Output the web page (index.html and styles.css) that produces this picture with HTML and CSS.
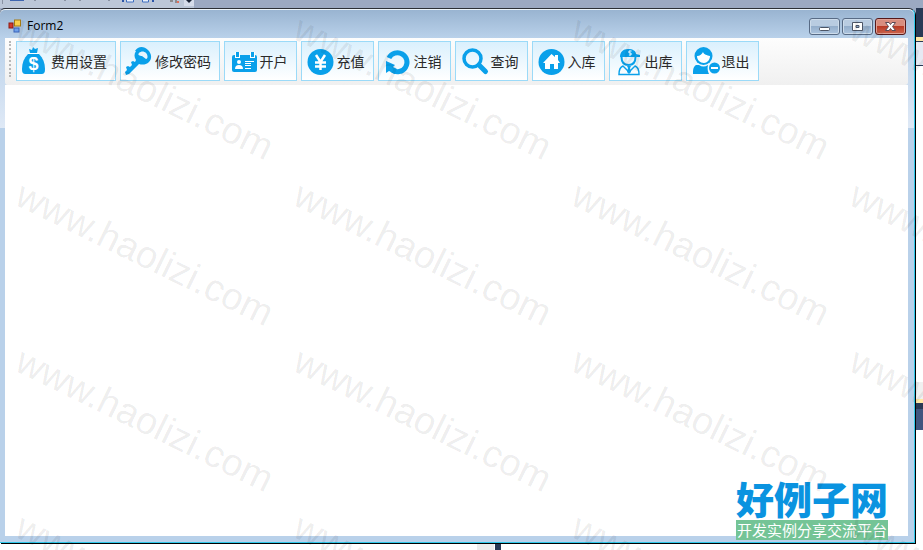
FILE: index.html
```
<!DOCTYPE html>
<html lang="zh-CN">
<head>
  <meta charset="UTF-8" />
  <meta name="viewport" content="width=device-width, initial-scale=1.0"/>
  <title>Form2</title>
  <link rel="stylesheet" href="styles.css">
</head>
<body>
  <div class="ide-top">
    <svg class="ide-tools" width="194" height="8" viewBox="0 0 194 8">
      <path d="M10 0h14v1H10z" fill="#3f66b0"/>
      <path d="M2 0h1v4H2zM34 0h2v1h-2zM64 0h2v1h-2zM79 0h2v1h-2zM108 0h2v1h-2z" fill="#8a93a3"/>
      <path d="M126.500 0v2h7V0M142.500 0v2h6V0" fill="#e8f0fc" stroke="#3f6fc0"/>
      <path d="M122 0h2v2h-2zM152 0h2v2h-2z" fill="#2b55a8"/>
      <path d="M170 0h3v2h-3zM175 0h2v3h-2z" fill="#8a8a8e"/>
      <path d="M177 1h2v2h-2z" fill="#e0705c"/>
      <path d="M184 0h10v6h-10z" fill="#d5dcea"/>
      <path d="M186 0h6l-3 3z" fill="#1b2436"/>
    </svg>
  </div>

  <div class="desktop">
    <div class="window">
      <header class="titlebar">
        <svg class="app-icon" width="14" height="14" viewBox="0 0 14 14">
          <rect x="1" y="4" width="4" height="5" fill="#d33a2c" stroke="#8e1a10"/>
          <rect x="6.500" y="1" width="6" height="6" fill="#f8d04c" stroke="#a57a12"/>
          <rect x="6" y="9" width="5" height="4" fill="#6ea0ea" stroke="#3a62b8"/>
        </svg>
        <h1>Form2</h1>
        <div class="controls">
          <button class="ctl" aria-label="最小化">
            <svg width="13" height="11" viewBox="0 0 13 11"><rect x="1.500" y="6.500" width="10" height="3" rx="1" fill="#fff" stroke="#4c5566"/></svg>
          </button>
          <button class="ctl" aria-label="最大化">
            <svg width="13" height="11" viewBox="0 0 13 11"><path d="M1.500 1.500h10v8h-10zM5 4.500h3v2H5z" fill="#fff" fill-rule="evenodd" stroke="#4c5566"/></svg>
          </button>
          <button class="ctl close" aria-label="关闭">
            <svg width="13" height="11" viewBox="0 0 13 11"><path d="M1.500 1.500h3.500l1.500 2 1.500-2h3.500L8.500 5.500l3 4H8l-1.500-2-1.500 2H1.500l3-4z" fill="#fff" stroke="#5b4a55"/></svg>
          </button>
        </div>
      </header>

      <nav class="toolbar">
        <span class="grip"></span>
        <button class="tool">
          <svg class="icon" viewBox="0 0 32 32">
            <path d="M13 8l-1-4 3 1 1-3 2 2 3-1-1 5z"/>
            <path d="M11 9h11c4 4 6 9 6 15 0 4-1 5-4 5H9c-3 0-4-1-4-5 0-6 2-11 6-15z"/>
            <path class="line" d="M11 8.500h11" stroke="#e4f4fd"/>
            <text x="16.500" y="25">$</text>
          </svg>
          费用设置
        </button>
        <button class="tool">
          <svg class="icon" viewBox="0 0 32 32">
            <path fill-rule="evenodd" d="M14 6c3-5 9-5 13-1 4 4 4 9 1 12-3 3-7 3-10 2L8 29l-3 1-1-3 2-2-1-3 2-1 2 1 2-2-1-3 2-1 2 1 1-2c-2-3-2-6 0-9zm4 2c-2 2 1 3 3 3l4 3c2 0 2-4 0-6-2-2-5-2-7 0z"/>
          </svg>
          修改密码
        </button>
        <button class="tool">
          <svg class="icon" viewBox="0 0 32 32">
            <path d="M8 10h21q2 0 2 2v13q0 2-2 2H8q-2 0-2-2V12q0-2 2-2z"/>
            <path class="white" d="M9 7h5v6H9zM24 7h5v6h-5z"/>
            <path d="M10 7h3v5h-3zM25 7h3v5h-3z"/>
            <circle class="white" cx="13" cy="17" r="2"/>
            <path class="white" d="M9 24q0-4 4-4t4 4zM19 16h9v1h-9zM19 18h6v1h-6zM19 20h6v1h-6zM19 23h6v1h-6z"/>
          </svg>
          开户
        </button>
        <button class="tool">
          <svg class="icon" viewBox="0 0 32 32">
            <circle cx="17.500" cy="17" r="13"/>
            <path class="line" d="M13 10l4.500 7 4.500-7M17.500 17v8M12 17.500h11M12 21.500h11" stroke="#fff" stroke-width="2.500"/>
          </svg>
          充值
        </button>
        <button class="tool">
          <svg class="icon" viewBox="0 0 32 32">
            <path class="line" d="M9 13a9.500 9.500 0 1 1 3 12" stroke-width="5"/>
            <path d="M6 16v12l3-2 6 3 2-5-4-2 2-2z"/>
          </svg>
          注销
        </button>
        <button class="tool">
          <svg class="icon" viewBox="0 0 32 32">
            <circle class="line" cx="15.500" cy="13.500" r="8.500" stroke-width="3.500"/>
            <path class="line" d="M22 20l6.500 6.500" stroke-width="5" stroke-linecap="round"/>
          </svg>
          查询
        </button>
        <button class="tool">
          <svg class="icon" viewBox="0 0 32 32">
            <circle cx="17.500" cy="17" r="13"/>
            <path class="white" d="M17.500 9l3.500 3v-2h3v5l2 3h-2v6h-4v-5h-4v5h-5v-6H9z"/>
          </svg>
          入库
        </button>
        <button class="tool">
          <svg class="icon" viewBox="0 0 32 32">
            <path d="M9 12c0-5 3-8 8-8s8 2 8 5l4 1v2z"/>
            <path class="line" d="M10.500 12c0 5 2 8 7 8s7-3 7-8" stroke-width="2"/>
            <path class="line" d="M12 21c-3 1-4 4-4 8.500h20c0-4.500-1-7.500-4-8.500l-6 6z" stroke-width="1.500"/>
            <path d="M16 21h4l-1 2 1 4-2 2-2-2 1-4z"/>
            <path class="line" d="M20.500 6H18v2h2v2h-2" stroke="#fff"/>
          </svg>
          出库
        </button>
        <button class="tool">
          <svg class="icon" viewBox="0 0 32 32">
            <circle cx="15.500" cy="11" r="9"/>
            <path class="white" d="M9 11c3 0 5-2 6-4 1 3 4 3 7 4 0 4-3 7-6 7-4 0-7-3-7-7z"/>
            <path d="M8 20h3c3 2 6 2 9 0-1 4 0 7 1 9H5c0-4 0-7 3-9z"/>
            <circle cx="26.500" cy="23" r="5.500"/>
            <path class="white" d="M23 22h7v2h-7z"/>
          </svg>
          退出
        </button>
      </nav>

      <main class="client"></main>
    </div>

    <div class="ide-side">
      <div class="side-head"></div>
      <div class="side-tab"></div>
      <div class="side-page"></div>
      <div class="side-foot"></div>
      <div class="side-rest"></div>
    </div>
  </div>

  <div class="ide-bottom"></div>

  <div class="site-logo">
    <strong>好例子网</strong>
    <span>开发实例分享交流平台</span>
  </div>

  <div class="watermark" aria-hidden="true">
    <span>www.haolizi.com</span><span>www.haolizi.com</span><span>www.haolizi.com</span><span>www.haolizi.com</span>
    <span>www.haolizi.com</span><span>www.haolizi.com</span><span>www.haolizi.com</span><span>www.haolizi.com</span>
    <span>www.haolizi.com</span><span>www.haolizi.com</span><span>www.haolizi.com</span><span>www.haolizi.com</span>
    <span>www.haolizi.com</span><span>www.haolizi.com</span><span>www.haolizi.com</span><span>www.haolizi.com</span>
  </div>
</body>
</html>
```
FILE: styles.css
```
* {
  margin: 0;
  padding: 0;
  box-sizing: border-box;
}
body {
  position: relative;
  display: flex;
  flex-direction: column;
  height: 100vh;
  overflow: hidden;
  background-color: white;
  font-family: "Noto Sans CJK SC", sans-serif;
}

/* what shows of the editor behind the form */
.ide-top {
  height: 8px;
  background-color: #9ca9c2;
}
.ide-tools {
  display: block;
  background-color: #bcc7d8;
}
.ide-bottom {
  height: 6px;
  background: linear-gradient(90deg, white 477px, #ececec 477px, #ececec 494px, white 494px, white 495px, #293955 495px, #293955 501px, white 501px);
}
.desktop {
  flex: 1;
  display: flex;
  min-height: 0;
  background: linear-gradient(#9ca9c2 8px, white 8px);
}
.ide-side {
  display: flex;
  flex-direction: column;
  width: 7px;
  background-color: white;
}
.side-head {
  height: 33px;
  background-color: #293955;
  border-bottom: 4px solid #ffe8a6;
}
.side-tab {
  height: 25px;
  background-color: #e6e9f3;
  border-top: 1px solid #293955;
  border-bottom: 1px solid #293955;
}
.side-page {
  flex: 1;
  border-bottom: 17px solid #f0f0f0;
}
.side-foot {
  height: 31px;
  background: linear-gradient(#293955 6px, #40557f 6px);
  border-top: 4px solid #ffe8a6;
}
.side-rest {
  height: 114px;
}

.window {
  flex: 1;
  display: flex;
  flex-direction: column;
  padding: 0 6px 6px 5px;
  border-top: 1px solid #2c2f36;
  border-right: 1px solid #2ec8ea;
  border-bottom: 1px solid #2ec8ea;
  border-radius: 5px 6px 0 0;
  box-shadow: 1px 1px 0 black, inset 0 1px 0 #eef5fb;
  margin: 0 1px 1px 0;
  background: linear-gradient(#98b3d0, #b9d1ea 29px, #dfe9f6 119px, #b9d1ea 119px);
}
.titlebar {
  display: flex;
  align-items: center;
  height: 29px;
  padding: 5px 2px 0 3px;
}
.titlebar h1 {
  flex: 1;
  margin-left: 5px;
  font: 12px/16px "Open Sans", sans-serif;
  color: black;
}
.controls {
  display: flex;
  gap: 2px;
}
.ctl {
  display: flex;
  align-items: center;
  justify-content: center;
  width: 31px;
  height: 17px;
  border: 1px solid #586b85;
  border-radius: 3px;
  box-shadow: inset 0 0 0 1px #cddceb;
  background: linear-gradient(#b9cce1 50%, #94aecb 50%, #adc5df);
}
.close {
  border-color: #56191a;
  box-shadow: inset 0 0 0 1px #e0a195;
  background: linear-gradient(#d88d7e 50%, #b93a24 50%, #cc6650);
}

.toolbar {
  display: flex;
  gap: 4px;
  height: 47px;
  padding: 3px 4px;
  border-radius: 0 0 3px 3px;
  background: linear-gradient(#fdfdfd, #f0f0f0);
}
.grip {
  width: 3px;
  height: 36px;
  border-left: 2px dotted #b8b8b8;
}
.tool {
  display: flex;
  align-items: center;
  justify-content: center;
  gap: 2px;
  min-width: 73px;
  height: 40px;
  padding-right: 8px;
  border: 1px solid #9bdaf8;
  background: linear-gradient(#daf0fd, #ffffff);
  font: 14px/20px "Noto Sans CJK SC", sans-serif;
  color: #2a2a2a;
  white-space: nowrap;
}
.icon {
  flex: none;
  width: 32px;
  height: 32px;
  overflow: visible;
  fill: #0aa0ea;
}
.icon text {
  fill: white;
  font: bold 18px "Liberation Sans", sans-serif;
  text-anchor: middle;
}
.icon .line {
  fill: none;
  stroke: #0aa0ea;
}
.icon .line[stroke] {
  stroke: white;
}
.icon .white {
  fill: white;
}
.client {
  flex: 1;
  background-color: white;
}

.site-logo {
  position: absolute;
  right: 35px;
  bottom: 10px;
  display: flex;
  flex-direction: column;
}
.site-logo strong {
  font: 900 38px/44px "Noto Sans CJK SC", sans-serif;
  color: #0a93e0;
}
.site-logo span {
  height: 20px;
  padding-left: 1px;
  background-color: #74c496;
  font-size: 15px;
  line-height: 20px;
  color: white;
}

.watermark {
  position: absolute;
  inset: 0;
  display: grid;
  grid-template-columns: repeat(4, 278px);
  grid-auto-rows: 166px;
  padding: 9px 0 0 27px;
  overflow: hidden;
  pointer-events: none;
}
.watermark span {
  justify-self: start;
  align-self: start;
  font: 38px/38px "Liberation Sans", sans-serif;
  color: rgba(0, 0, 0, 0.08);
  transform: rotate(26deg);
  transform-origin: 0 0;
}
```
